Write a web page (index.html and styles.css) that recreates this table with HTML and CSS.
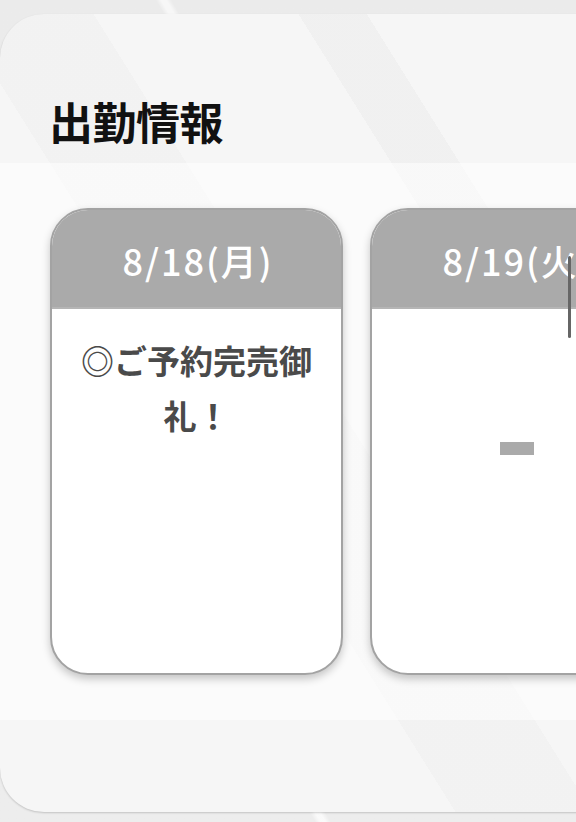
FILE: index.html
```html
<!DOCTYPE html>
<html lang="ja">
<head>
<meta charset="utf-8">
<link rel="stylesheet" href="styles.css">
</head>
<body>
<div class="panel">
  <h2 class="title">出勤情報</h2>
  <section class="schedule">
    <div class="cards">
      <div class="card">
        <div class="card-head">8/18(月)</div>
        <div class="card-body"><p class="note">◎ご予約完売御礼！</p></div>
      </div>
      <div class="card">
        <div class="card-head">8/19(火)</div>
        <div class="card-body"><div class="dash"></div></div>
      </div>
    </div>
  </section>
</div>
<div class="scroll-thumb"></div>
</body>
</html>
```
FILE: styles.css
```css
html, body {
  margin: 0;
  padding: 0;
}
body {
  width: 576px;
  height: 822px;
  overflow: hidden;
  position: relative;
  font-family: "Noto Sans CJK JP", "Noto Sans", sans-serif;
  background:
    linear-gradient(60deg, transparent 0 30%, rgba(255,255,255,0.7) 30.5% 31%, transparent 31.5% 100%),
    linear-gradient(60deg, transparent 0 60%, rgba(255,255,255,0.6) 60.5% 61%, transparent 61.5% 100%),
    linear-gradient(180deg, #ebebeb, #ededed);
}
.panel {
  margin-top: 14px;
  width: 640px;
  height: 798px;
  border-radius: 44px;
  background:
    linear-gradient(58deg, transparent 0 40%, rgba(235,235,235,0.35) 40% 52%, transparent 52% 100%),
    linear-gradient(58deg, transparent 0 70%, rgba(230,230,230,0.35) 70% 76%, transparent 76% 100%),
    #f6f6f6;
  box-shadow: 0 1px 2px rgba(0,0,0,0.18);
  display: flex;
  flex-direction: column;
}
.title {
  margin: 0;
  padding: 85px 0 20px 49px;
  font-size: 44px;
  line-height: 44px;
  font-weight: 700;
  color: #111;
  letter-spacing: -0.5px;
}
.schedule {
  padding: 45px 0 45px 50px;
  background: rgba(255,255,255,0.55);
}
.cards {
  display: flex;
  gap: 27px;
}
.card {
  width: 293px;
  height: 467px;
  flex: none;
  box-sizing: border-box;
  border: 2px solid #a3a3a3;
  border-radius: 38px;
  background: #fff;
  overflow: hidden;
  box-shadow: 0 4px 8px rgba(0,0,0,0.22);
  display: flex;
  flex-direction: column;
}
.card-head {
  height: 99px;
  background: #aaaaaa;
  color: #fff;
  font-size: 36px;
  font-weight: 500;
  letter-spacing: 2px;
  display: flex;
  align-items: center;
  justify-content: center;
  padding: 2px 0 0 3px;
  box-sizing: border-box;
  border-bottom: 2px solid #b5b5b5;
  white-space: nowrap;
}
.card-body {
  flex: 1;
  padding: 24px 16px 0;
}
.note {
  margin: 0;
  text-align: center;
  font-size: 33px;
  line-height: 55px;
  font-weight: 700;
  color: #4a4a4a;
}
.dash {
  width: 34px;
  height: 13px;
  background: #aaaaaa;
  margin: 109px auto 0;
}
.scroll-thumb {
  position: absolute;
  left: 568px;
  top: 256px;
  width: 3px;
  height: 82px;
  border-radius: 2px;
  background: #666;
}
```
